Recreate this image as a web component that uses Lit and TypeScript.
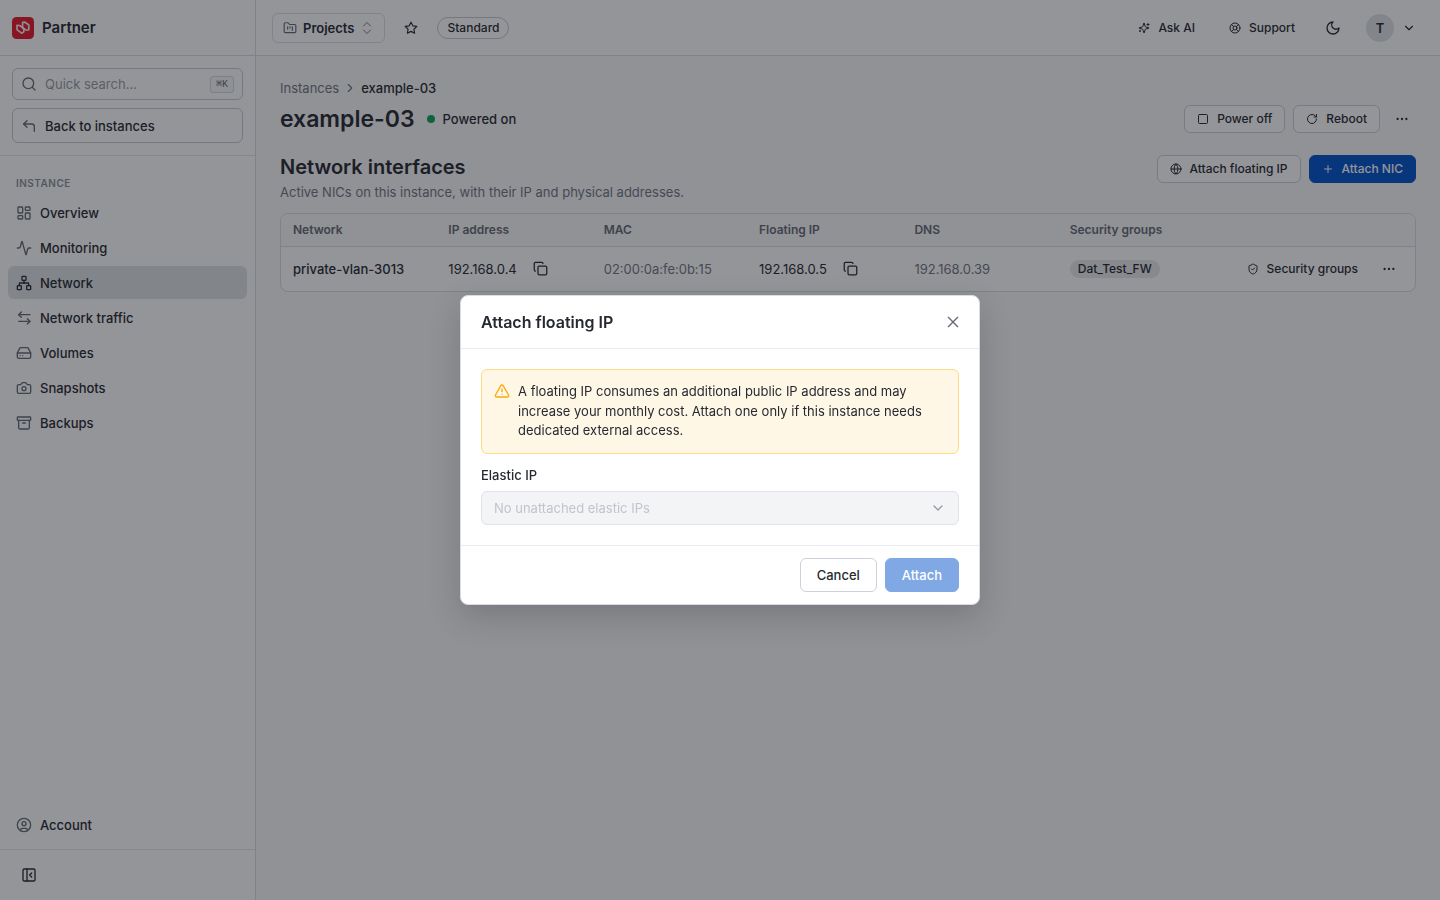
import { LitElement, html, css, svg } from "lit";
import { customElement, property, state } from "lit/decorators.js";
import { classMap } from "lit/directives/class-map.js";

const ICONS: Record<string, unknown> = {
  search: svg`<circle cx="11" cy="11" r="8"/><path d="m21 21-4.3-4.3"/>`,
  back: svg`<path d="M20 20v-7a4 4 0 0 0-4-4H4"/><path d="M9 14 4 9l5-5"/>`,
  dashboard: svg`<rect width="7" height="9" x="3" y="3" rx="1"/><rect width="7" height="5" x="14" y="3" rx="1"/><rect width="7" height="9" x="14" y="12" rx="1"/><rect width="7" height="5" x="3" y="16" rx="1"/>`,
  activity: svg`<path d="M22 12h-2.48a2 2 0 0 0-1.93 1.46l-2.35 8.36a.25.25 0 0 1-.48 0L9.24 2.18a.25.25 0 0 0-.48 0l-2.35 8.36A2 2 0 0 1 4.49 12H2"/>`,
  network: svg`<rect x="16" y="16" width="6" height="6" rx="1"/><rect x="2" y="16" width="6" height="6" rx="1"/><rect x="9" y="2" width="6" height="6" rx="1"/><path d="M5 16v-3a1 1 0 0 1 1-1h12a1 1 0 0 1 1 1v3"/><path d="M12 12V8"/>`,
  traffic: svg`<path d="M8 3 4 7l4 4"/><path d="M4 7h17"/><path d="m17 21 4-4-4-4"/><path d="M21 17H4"/>`,
  drive: svg`<path d="M22 12H2"/><path d="M5.45 5.11 2 12v6a2 2 0 0 0 2 2h16a2 2 0 0 0 2-2v-6l-3.45-6.89A2 2 0 0 0 16.76 4H7.24a2 2 0 0 0-1.79 1.11z"/><path d="M6 16h.01"/><path d="M10 16h.01"/>`,
  camera: svg`<path d="M14.5 4h-5L7 7H4a2 2 0 0 0-2 2v9a2 2 0 0 0 2 2h16a2 2 0 0 0 2-2V9a2 2 0 0 0-2-2h-3l-2.500-3z"/><circle cx="12" cy="13" r="3"/>`,
  archive: svg`<rect width="20" height="5" x="2" y="3" rx="1"/><path d="M4 8v11a2 2 0 0 0 2 2h12a2 2 0 0 0 2-2V8"/><path d="M10 12h4"/>`,
  user: svg`<circle cx="12" cy="12" r="10"/><circle cx="12" cy="10" r="3"/><path d="M7 20.662V19a2 2 0 0 1 2-2h6a2 2 0 0 1 2 2v1.662"/>`,
  panel: svg`<rect width="18" height="18" x="3" y="3" rx="2"/><path d="M9 3v18"/><path d="m16 15-3-3 3-3"/>`,
  folder: svg`<path d="M4 20h16a2 2 0 0 0 2-2V8a2 2 0 0 0-2-2h-7.930a2 2 0 0 1-1.660-.9l-.820-1.200A2 2 0 0 0 7.930 3H4a2 2 0 0 0-2 2v13c0 1.100.9 2 2 2Z"/><path d="M8 10v4"/><path d="M12 10v2"/><path d="M16 10v6"/>`,
  updown: svg`<path d="m6 15.500 6 6 6-6"/><path d="m6 8.500 6-6 6 6"/>`,
  star: svg`<path d="M12 2l3.090 6.260L22 9.270l-5 4.870 1.180 6.880L12 17.770l-6.180 3.250L7 14.140 2 9.270l6.910-1.010z"/>`,
  sparkles: svg`<path d="M9.937 15.500A2 2 0 0 0 8.500 14.063l-6.135-1.582a.5.5 0 0 1 0-.962L8.500 9.936A2 2 0 0 0 9.937 8.500l1.582-6.135a.5.5 0 0 1 .963 0L14.063 8.500A2 2 0 0 0 15.500 9.937l6.135 1.581a.5.5 0 0 1 0 .964L15.500 14.063a2 2 0 0 0-1.437 1.437l-1.582 6.135a.5.5 0 0 1-.963 0z"/><path d="M20 3v4"/><path d="M22 5h-4"/><path d="M4 17v2"/><path d="M5 18H3"/>`,
  buoy: svg`<circle cx="12" cy="12" r="10"/><circle cx="12" cy="12" r="4"/><path d="m4.930 4.930 4.240 4.240"/><path d="m14.830 9.170 4.240-4.240"/><path d="m14.830 14.830 4.240 4.240"/><path d="m9.170 14.830-4.240 4.240"/>`,
  moon: svg`<path d="M12 3a6 6 0 0 0 9 9 9 9 0 1 1-9-9Z"/>`,
  down: svg`<path d="m6 9 6 6 6-6"/>`,
  right: svg`<path d="m9 18 6-6-6-6"/>`,
  square: svg`<rect width="18" height="18" x="3" y="3" rx="2"/>`,
  rotate: svg`<path d="M21 12a9 9 0 1 1-9-9c2.520 0 4.930 1 6.740 2.740L21 8"/><path d="M21 3v5h-5"/>`,
  dots: svg`<circle cx="12" cy="12" r="1"/><circle cx="19.500" cy="12" r="1"/><circle cx="4.500" cy="12" r="1"/>`,
  globe: svg`<circle cx="12" cy="12" r="10"/><path d="M12 2a14.500 14.500 0 0 0 0 20 14.500 14.500 0 0 0 0-20"/><path d="M2 12h20"/>`,
  plus: svg`<path d="M5 12h14"/><path d="M12 5v14"/>`,
  copy: svg`<rect width="14" height="14" x="8" y="8" rx="2"/><path d="M4 16c-1.100 0-2-.9-2-2V4c0-1.100.9-2 2-2h10c1.100 0 2 .9 2 2"/>`,
  shield: svg`<path d="M20 13c0 5-3.500 7.500-7.660 8.950a1 1 0 0 1-.67-.01C7.500 20.500 4 18 4 13V6a1 1 0 0 1 1-1c2 0 4.500-1.200 6.240-2.720a1.170 1.170 0 0 1 1.520 0C14.510 3.810 17 5 19 5a1 1 0 0 1 1 1z"/><path d="m9 12 2 2 4-4"/>`,
  close: svg`<path d="M19 5 5 19"/><path d="m5 5 14 14"/>`,
  alert: svg`<path d="m21.730 18-8-14a2 2 0 0 0-3.480 0l-8 14A2 2 0 0 0 4 21h16a2 2 0 0 0 1.730-3"/><path d="M12 9v4"/><path d="M12 17h.01"/>`,
};

const icon = (name: string, size = 16, stroke = 2) => html`<svg
  class="icon"
  width=${size}
  height=${size}
  viewBox="0 0 24 24"
  fill="none"
  stroke="currentColor"
  stroke-width=${stroke}
  stroke-linecap="round"
  stroke-linejoin="round"
  aria-hidden="true"
>${ICONS[name]}</svg>`;

const shared = css`
  :host, * { box-sizing: border-box; }
  .icon { display: block; flex: none; }
  a { color: inherit; text-decoration: none; }
  button { font: inherit; color: inherit; cursor: pointer; margin: 0; }
  button:disabled { cursor: default; }
  .btn {
    display: inline-flex; align-items: center; justify-content: center; gap: 8px;
    height: 28px; padding: 0 12px; border: 1px solid #ccd0da; border-radius: 6px;
    background: #fff; color: #262932; font-size: 12px; font-weight: 500; white-space: nowrap;
  }
  .btn.ghost { border-color: transparent; background: transparent; }
  .btn.primary { border-color: #0052cc; background: #0052cc; color: #fff; }
  .btn.square { width: 28px; padding: 0; }
  .btn.large { height: 34px; padding: 0 16px; font-size: 13px; }
  .btn.primary:disabled { opacity: 0.5; }
`;

@customElement("side-bar")
class SideBar extends LitElement {
  @property() active = "Network";

  static styles = [shared, css`
    :host {
      display: flex; flex-direction: column; flex: none; width: 256px;
      background: #fff; border-right: 1px solid #d9dce3;
    }
    .brand {
      display: flex; align-items: center; gap: 8px; height: 56px; padding: 0 12px;
      border-bottom: 1px solid #d9dce3; font-size: 15px; font-weight: 600;
    }
    .tools {
      display: flex; flex-direction: column; gap: 8px; padding: 12px;
      border-bottom: 1px solid #e3e5ea;
    }
    .search, .back {
      display: flex; align-items: center; gap: 8px; padding: 0 8px;
      border: 1px solid #c6cad4; border-radius: 6px; color: #656a76;
    }
    .search { height: 32px; }
    .back { height: 35px; font-weight: 500; }
    .back span { color: #262932; }
    .search input {
      flex: 1; min-width: 0; border: 0; padding: 0; background: none; outline: none;
      font: inherit; color: #262932;
    }
    .search input::placeholder { color: #989ca6; opacity: 1; }
    kbd {
      height: 17px; padding: 0 5px; border: 1px solid #d5d8df; border-radius: 3px;
      background: #f6f7f8; font: 10px/15px "Liberation Mono", "DejaVu Sans Mono", monospace;
    }
    nav { display: flex; flex-direction: column; gap: 2px; padding: 20px 8px; }
    .heading {
      margin: 0; padding: 0 8px 3px; font-size: 10px; line-height: 15px; font-weight: 600;
      letter-spacing: 0.05em; color: #8a8f9b;
    }
    .item {
      display: flex; align-items: center; gap: 8px; height: 33px; padding: 0 8px;
      border-radius: 6px; color: #656a76; font-weight: 500;
    }
    .item span { color: #262932; }
    .item.on { background: #dfe3e6; color: #262932; }
    .account { margin-top: auto; padding: 8px; }
    .bottom { border-top: 1px solid #e3e5ea; padding: 11px 15px; }
  `];

  render() {
    const items = [
      ["dashboard", "Overview"], ["activity", "Monitoring"], ["network", "Network"],
      ["traffic", "Network traffic"], ["drive", "Volumes"], ["camera", "Snapshots"], ["archive", "Backups"],
    ];
    return html`
      <div class="brand">
        <svg class="icon" width="22" height="22" viewBox="0 0 22 22" fill="none" aria-hidden="true">
          <rect width="22" height="22" rx="4.5" fill="#e8192f"/>
          <g stroke="#fff" stroke-width="1.700" stroke-linejoin="round" stroke-opacity="0.9">
            <path d="M5 8.300V12.600L9.600 16.200 11.800 14.800V11.600L7.600 8.500Z"/>
            <path d="M10.600 5.400 13 5.200 16.800 8V12.800L13.800 13 10.600 10.600Z"/>
          </g>
        </svg>
        <span>Partner</span>
      </div>
      <div class="tools">
        <label class="search">${icon("search")}
          <input type="text" placeholder="Quick search…" aria-label="Quick search" /><kbd>⌘K</kbd>
        </label>
        <a class="back" href="#instances">${icon("back")}<span>Back to instances</span></a>
      </div>
      <nav aria-label="Instance">
        <p class="heading">INSTANCE</p>
        ${items.map(([glyph, label]) => html`
          <a class=${classMap({ item: true, on: label === this.active })} href="#${label}">
            ${icon(glyph)}<span>${label}</span>
          </a>`)}
      </nav>
      <div class="account"><a class="item" href="#account">${icon("user")}<span>Account</span></a></div>
      <div class="bottom"><button class="btn ghost square" aria-label="Collapse sidebar">${icon("panel")}</button></div>
    `;
  }
}

@customElement("top-bar")
class TopBar extends LitElement {
  static styles = [shared, css`
    :host {
      display: flex; align-items: center; gap: 8px; height: 56px; padding: 0 16px;
      background: #fff; border-bottom: 1px solid #d9dce3;
    }
    .project {
      display: flex; align-items: center; gap: 6px; height: 30px; padding: 0 10px;
      border: 1px solid #dcdfe5; border-radius: 6px; background: #fff;
      font-size: 13px; font-weight: 600; color: #262932;
    }
    .project .icon { color: #656a76; }
    .btn.favorite { width: 36px; }
    .plan {
      height: 22px; padding: 0 9px; border: 1px solid #c6cad4; border-radius: 11px;
      font-size: 12px; line-height: 20px; font-weight: 500;
    }
    .btn.theme { width: 34px; }
    .right { display: flex; align-items: center; gap: 8px; margin-left: auto; }
    .profile {
      display: flex; align-items: center; gap: 8px; padding: 0 8px; border: 0; background: none;
    }
    .avatar {
      display: grid; place-items: center; width: 28px; height: 28px; border-radius: 50%;
      background: #dfe3e6; font-weight: 600;
    }
  `];

  render() {
    return html`
      <button class="project">${icon("folder", 14)}<span>Projects</span>${icon("updown", 14, 1.5)}</button>
      <button class="btn ghost square favorite" aria-label="Favorite">${icon("star", 14)}</button>
      <span class="plan">Standard</span>
      <div class="right">
        <button class="btn ghost">${icon("sparkles", 12)}Ask AI</button>
        <button class="btn ghost">${icon("buoy", 12)}Support</button>
        <button class="btn ghost square theme" aria-label="Dark theme">${icon("moon")}</button>
        <button class="profile" aria-label="Profile"><span class="avatar">T</span>${icon("down", 14)}</button>
      </div>
    `;
  }
}

@customElement("network-page")
class NetworkPage extends LitElement {
  static styles = [shared, css`
    :host { display: block; padding: 24px; }
    .crumbs { display: flex; align-items: center; gap: 4px; line-height: 16px; color: #717683; }
    .crumbs [aria-current] { color: #262932; font-weight: 500; }
    .row { display: flex; align-items: center; justify-content: space-between; gap: 16px; }
    .row.top { align-items: flex-start; margin-top: 19px; }
    .title { display: flex; align-items: center; gap: 12px; }
    .actions { display: flex; gap: 8px; }
    h1, h2, p { margin: 0; }
    h1 { font-size: 23px; line-height: 30px; font-weight: 600; }
    h2 { font-size: 20px; line-height: 24px; font-weight: 600; }
    p { margin-top: 3px; line-height: 20px; color: #717683; }
    .head { margin-top: 6px; min-height: 34px; }
    .status { display: flex; align-items: center; gap: 8px; font-weight: 500; }
    .status::before { content: ""; width: 8px; height: 8px; border-radius: 50%; background: #10a35a; }
    .card {
      margin-top: 11px; border: 1px solid #d9dce3; border-radius: 8px; overflow: hidden; background: #fff;
    }
    table { width: 100%; border-collapse: collapse; table-layout: fixed; }
    th, td { padding: 0 12px; text-align: left; white-space: nowrap; }
    th { width: 13.7%; height: 32px; background: #f9f9fa; font-size: 12px; font-weight: 600; color: #656a76; }
    th:last-child { width: auto; }
    td { height: 45px; border-top: 1px solid #d9dce3; }
    .strong { font-weight: 500; }
    .muted { color: #717683; }
    .ip { display: flex; align-items: center; gap: 12px; }
    .copy { display: flex; padding: 4px; border: 0; background: none; }
    .tag {
      display: block; width: fit-content; height: 18px; padding: 0 8px; border-radius: 9px;
      background: #e7e9ec; font-size: 12px; line-height: 18px; font-weight: 500;
    }
    .tools { display: flex; justify-content: flex-end; gap: 4px; }
  `];

  private ip(value: string) {
    return html`<div class="ip"><span>${value}</span>
      <button class="copy" aria-label="Copy ${value}">${icon("copy", 15)}</button></div>`;
  }

  render() {
    const columns = ["Network", "IP address", "MAC", "Floating IP", "DNS", "Security groups"];
    return html`
      <nav class="crumbs" aria-label="Breadcrumb">
        <a href="#instances">Instances</a>${icon("right", 14)}<span aria-current="page">example-03</span>
      </nav>
      <div class="row head">
        <div class="title"><h1>example-03</h1><span class="status">Powered on</span></div>
        <div class="actions">
          <button class="btn">${icon("square", 12)}Power off</button>
          <button class="btn">${icon("rotate", 12)}Reboot</button>
          <button class="btn ghost square" aria-label="More actions">${icon("dots", 14)}</button>
        </div>
      </div>
      <div class="row top">
        <div>
          <h2>Network interfaces</h2>
          <p>Active NICs on this instance, with their IP and physical addresses.</p>
        </div>
        <div class="actions">
          <button class="btn">${icon("globe", 12)}Attach floating IP</button>
          <button class="btn primary">${icon("plus", 12)}Attach NIC</button>
        </div>
      </div>
      <div class="card">
        <table>
          <thead><tr>${columns.map((c) => html`<th scope="col">${c}</th>`)}<th></th></tr></thead>
          <tbody>
            <tr>
              <td class="strong">private-vlan-3013</td>
              <td>${this.ip("192.168.0.4")}</td>
              <td class="muted">02:00:0a:fe:0b:15</td>
              <td>${this.ip("192.168.0.5")}</td>
              <td class="muted">192.168.0.39</td>
              <td><span class="tag">Dat_Test_FW</span></td>
              <td>
                <div class="tools">
                  <button class="btn ghost">${icon("shield", 12)}Security groups</button>
                  <button class="btn ghost square" aria-label="More">${icon("dots", 14)}</button>
                </div>
              </td>
            </tr>
          </tbody>
        </table>
      </div>
    `;
  }
}

@customElement("attach-dialog")
class AttachDialog extends LitElement {
  static styles = [shared, css`
    :host {
      position: fixed; inset: 0; display: grid; place-items: center; padding: 16px;
      background: rgba(18, 20, 26, 0.45);
    }
    .dialog {
      width: 100%; max-width: 520px; background: #fff; border: 1px solid #d9dce3;
      border-radius: 8px; box-shadow: 0 12px 32px rgba(16, 24, 32, 0.2);
    }
    header {
      display: flex; align-items: center; justify-content: space-between;
      padding: 12px 12px 12px 20px; border-bottom: 1px solid #eaecf0;
    }
    h2 { margin: 0; font-size: 16px; line-height: 24px; font-weight: 600; }
    header .btn { color: #656a76; }
    .body { display: flex; flex-direction: column; gap: 12px; padding: 20px; }
    .warning {
      display: flex; gap: 8px; padding: 12px; border: 1px solid #ffdb85; border-radius: 6px;
      background: #fff7e6; line-height: 1.5;
    }
    .warning .icon { margin-top: 1px; color: #f9ab0a; }
    .warning p { margin: 0; }
    .field { display: flex; flex-direction: column; gap: 6px; }
    label { line-height: 19px; font-weight: 500; }
    .select { display: grid; align-items: center; color: #9599a4; }
    .select > * { grid-area: 1 / 1; }
    .select .icon { justify-self: end; margin-right: 13px; pointer-events: none; }
    select {
      appearance: none; width: 100%; height: 34px; padding: 0 12px; border: 1px solid #dfe2e8;
      border-radius: 6px; background: #f3f4f6; font: inherit; color: #c0c4cd; opacity: 1;
    }
    footer {
      display: flex; justify-content: flex-end; gap: 8px; padding: 12px 20px;
      border-top: 1px solid #eaecf0;
    }
  `];

  private close() {
    this.dispatchEvent(new CustomEvent("dismiss"));
  }

  render() {
    return html`
      <div class="dialog" role="dialog" aria-modal="true" aria-labelledby="title">
        <header>
          <h2 id="title">Attach floating IP</h2>
          <button class="btn ghost square" aria-label="Close" @click=${this.close}>${icon("close")}</button>
        </header>
        <div class="body">
          <div class="warning">
            ${icon("alert")}
            <p>A floating IP consumes an additional public IP address and may increase your monthly cost. Attach one only if this instance needs dedicated external access.</p>
          </div>
          <div class="field">
            <label for="elastic">Elastic IP</label>
            <div class="select">
              <select id="elastic" disabled><option>No unattached elastic IPs</option></select>
              ${icon("down")}
            </div>
          </div>
        </div>
        <footer>
          <button class="btn large" @click=${this.close}>Cancel</button>
          <button class="btn primary large" disabled>Attach</button>
        </footer>
      </div>
    `;
  }
}

@customElement("app-root")
class AppRoot extends LitElement {
  @state() private open = true;

  static styles = css`
    :host {
      display: flex; min-height: 100vh; background: #f9f9fa; color: #262932;
      font: 13px/20px Inter, "Liberation Sans", sans-serif;
    }
    main { flex: 1; min-width: 0; }
  `;

  render() {
    return html`
      <side-bar active="Network"></side-bar>
      <main>
        <top-bar></top-bar>
        <network-page></network-page>
      </main>
      ${this.open ? html`<attach-dialog @dismiss=${() => (this.open = false)}></attach-dialog>` : null}
    `;
  }
}
